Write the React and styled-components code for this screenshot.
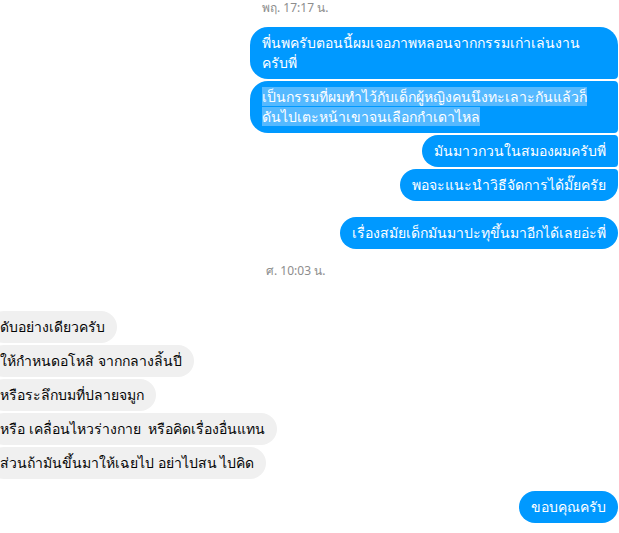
import React from 'react';
import styled, { createGlobalStyle } from 'styled-components';

const Global = createGlobalStyle`
  html, body {
    margin: 0;
    padding: 0;
    background: #fff;
    overflow: hidden;
  }
  body {
    font-family: Tahoma, "Noto Sans", "DejaVu Sans", sans-serif;
  }
`;

const Thread = styled.div`
  width: 619px;
  height: 533px;
  display: flex;
  flex-direction: column;
  box-sizing: border-box;
`;

const Stamp = styled.div`
  font-size: 12px;
  color: #8d8d8d;
  line-height: 16px;
  padding-left: ${(p) => p.left}px;
  margin-top: ${(p) => p.top || 0}px;
  margin-bottom: ${(p) => p.bottom || 0}px;
`;

const Group = styled.div`
  display: flex;
  flex-direction: column;
  align-items: ${(p) => (p.mine ? 'flex-end' : 'flex-start')};
  gap: 2px;
  padding-right: ${(p) => (p.mine ? '1px' : '0')};
  margin-left: ${(p) => (p.mine ? '0' : '-12px')};
  margin-top: ${(p) => p.top || 0}px;
`;

const Bubble = styled.div`
  width: ${(p) => (p.wide ? '368px' : 'auto')};
  max-width: 368px;
  box-sizing: border-box;
  padding: 6px 12px;
  font-size: 14px;
  line-height: 20px;
  white-space: pre-wrap;
  color: ${(p) => (p.mine ? '#fff' : '#050505')};
  background: ${(p) => (p.mine ? '#0099ff' : '#f0f0f0')};
  border-radius: ${(p) =>
    p.mine
      ? `18px ${p.first ? 18 : 4}px ${p.last ? 18 : 4}px 18px`
      : '18px'};
`;

const Selected = styled.span`
  background: #55b9ff;
`;

const outgoing = [
  { text: 'พี่นพครับตอนนี้ผมเจอภาพหลอนจากกรรมเก่าเล่นงาน\nครับพี่', wide: true },
  {
    text: 'เป็นกรรมที่ผมทำไว้กับเด็กผู้หญิงคนนึงทะเลาะกันแล้วก็\nดันไปเตะหน้าเขาจนเลือกกำเดาไหล',
    wide: true,
    selected: true,
  },
  { text: 'มันมาวกวนในสมองผมครับพี่' },
  { text: 'พอจะแนะนำวิธีจัดการได้มั๊ยครัย' },
];

const incoming = [
  'ดับอย่างเดียวครับ',
  'ให้กำหนดอโหสิ จากกลางลิ้นปี่',
  'หรือระลึกบมที่ปลายจมูก',
  'หรือ เคลื่อนไหวร่างกาย  หรือคิดเรื่องอื่นแทน',
  'ส่วนถ้ามันขึ้นมาให้เฉยไป อย่าไปสน ไปคิด',
];

export default function App() {
  return (
    <Thread>
      <Global />
      <Stamp left={262} top={0} bottom={11}>พฤ. 17:17 น.</Stamp>
      <Group mine>
        {outgoing.map((m, i) => (
          <Bubble
            mine
            key={i}
            wide={m.wide}
            first={i === 0}
            last={i === outgoing.length - 1}
          >
            {m.selected ? <Selected>{m.text}</Selected> : m.text}
          </Bubble>
        ))}
      </Group>
      <Group mine top={16}>
        <Bubble mine first last>เรื่องสมัยเด็กมันมาปะทุขึ้นมาอีกได้เลยอ่ะพี่</Bubble>
      </Group>
      <Stamp left={266} top={14} bottom={32}>ศ. 10:03 น.</Stamp>
      <Group>
        {incoming.map((t) => (
          <Bubble key={t}>{t}</Bubble>
        ))}
      </Group>
      <Group mine top={12}>
        <Bubble mine first last>ขอบคุณครับ</Bubble>
      </Group>
    </Thread>
  );
}
